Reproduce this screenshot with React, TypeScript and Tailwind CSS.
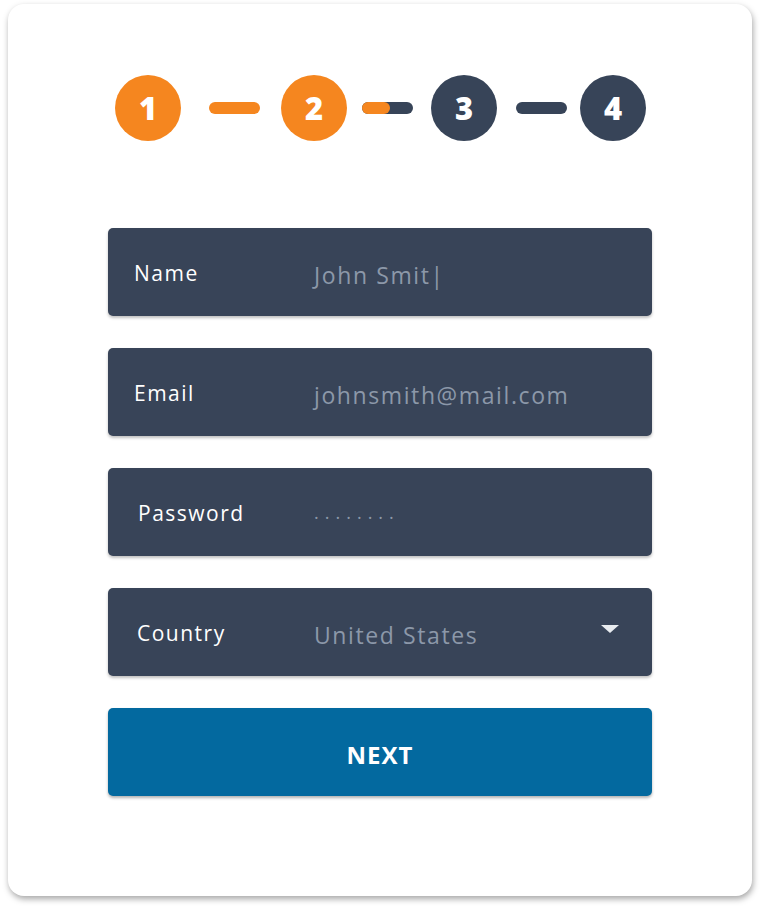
import React from 'react';

const font = { fontFamily: '"Open Sans", "Liberation Sans", sans-serif' };

function Step({ n, active }: { n: number; active: boolean }) {
  return (
    <div
      className={`flex h-[66px] w-[66px] shrink-0 items-center justify-center rounded-full text-[31px] font-extrabold text-white ${
        active ? 'bg-[#f5861f]' : 'bg-[#374458]'
      }`}
    >
      {n}
    </div>
  );
}

function Field({
  label,
  value,
  labelPad,
  dropdown,
}: {
  label: string;
  value: React.ReactNode;
  labelPad: string;
  dropdown?: boolean;
}) {
  return (
    <div className="flex h-[88px] w-[544px] items-center rounded-[5px] bg-[#384458] shadow-[0_2px_3px_rgba(0,0,0,0.25)]">
      <div className={`w-[206px] shrink-0 pt-[3px] text-[21px] tracking-[1.5px] text-white ${labelPad}`}>{label}</div>
      <div className="flex-1 pt-[7px] text-[23px] tracking-[1.6px] text-[#8c98a9]">{value}</div>
      {dropdown && (
        <svg width="20" height="10" viewBox="0 0 20 10" className="mr-[32px] mt-[-6px]">
          <path d="M1 1 L19 1 L10 9 Z" fill="#e8ebef" />
        </svg>
      )}
    </div>
  );
}

export default function App() {
  return (
    <div className="min-h-[908px] bg-white pl-[8px] pt-[4px]" style={font}>
      <div className="flex h-[892px] w-[744px] flex-col items-center rounded-[16px] bg-white shadow-[1px_3px_6px_rgba(0,0,0,0.35)]">
        {/* stepper */}
        <div className="mt-[71px] flex w-full items-center pl-[107px]">
          <Step n={1} active />
          <div className="ml-[28px] h-[12px] w-[51px] rounded-full bg-[#f5861f]" />
          <div className="ml-[21px]">
            <Step n={2} active />
          </div>
          <div className="ml-[15px] flex h-[12px] w-[51px] rounded-full bg-[#374458]">
            <div className="h-[12px] w-[28px] rounded-full bg-[#f5861f]" />
          </div>
          <div className="ml-[18px]">
            <Step n={3} active={false} />
          </div>
          <div className="ml-[19px] h-[12px] w-[51px] rounded-full bg-[#374458]" />
          <div className="ml-[13px]">
            <Step n={4} active={false} />
          </div>
        </div>

        {/* form */}
        <div className="mt-[87px] flex flex-col gap-[32px]">
          <Field label="Name" value="John Smit|" labelPad="pl-[26px]" />
          <Field label="Email" value="johnsmith@mail.com" labelPad="pl-[26px]" />
          <Field
            label="Password"
            value={<span className="relative top-[-5px] text-[18px] tracking-[6px]">........</span>}
            labelPad="pl-[30px]"
          />
          <Field label="Country" value="United States" labelPad="pl-[29px]" dropdown />
          <button className="h-[88px] w-[544px] rounded-[5px] bg-[#03699f] pt-[6px] text-[24px] font-bold tracking-[1px] text-white shadow-[0_2px_3px_rgba(0,0,0,0.3)]">
            NEXT
          </button>
        </div>
      </div>
    </div>
  );
}
